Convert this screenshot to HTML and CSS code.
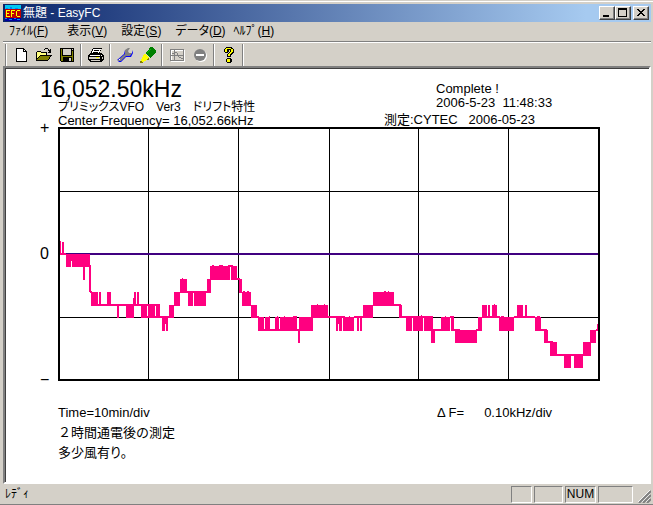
FILE: index.html
```html
<!DOCTYPE html>
<html lang="ja">
<head>
<meta charset="utf-8">
<title>無題 - EasyFC</title>
<link rel="stylesheet" href="styles.css">
</head>
<body>
<div class="window">
  <header class="titlebar">
    <svg class="app-icon" viewBox="0 0 16 16" shape-rendering="crispEdges" aria-hidden="true">
      <path fill="#00c8f0" d="M0 0h16v4H0z"/><path fill="#0000a0" d="M0 4h16v12H0z"/>
      <path fill="#0080ff" d="M1 3h2v1H1zM5 2h2v2H5zM10 3h3v1h-3zM0 13h2v1H0zM4 14h3v1H4zM9 13h2v1H9zM12 14h3v1h-3z"/>
      <path fill="#c00000" d="M0 4h16v9H0z"/>
      <path fill="#ffff00" d="M1 5h4v1H2v2h2v1H2v2h3v1H1zM6 5h4v1H7v2h2v1H7v3H6zM12 5h3v1h-3zM11 6h1v5h-1zM12 11h3v1h-3z"/>
    </svg>
    <h1 class="title">無題 - EasyFC</h1>
    <div class="caption">
      <button type="button" class="cap" aria-label="最小化"><svg viewBox="0 0 12 10" shape-rendering="crispEdges"><path d="M2 7h6v2H2z"/></svg></button>
      <button type="button" class="cap" aria-label="最大化"><svg viewBox="0 0 12 10" shape-rendering="crispEdges"><path fill-rule="evenodd" d="M1 0h9v9H1zM2 2v6h7V2z"/></svg></button>
      <button type="button" class="cap close" aria-label="閉じる"><svg viewBox="0 0 12 10" shape-rendering="crispEdges"><path d="M2 1h2v1h1v1h2V2h1V1h2v1H9v1H8v1H7v1h1v1h1v1h1v1H8V7H7V6H5v1H4v1H2V7h1V6h1V5h1V4H4V3H3V2H2z"/></svg></button>
    </div>
  </header>

  <nav class="menubar">
    <button type="button">ﾌｧｲﾙ(<u>F</u>)</button>
    <button type="button">表示(<u>V</u>)</button>
    <button type="button">設定(<u>S</u>)</button>
    <button type="button" class="palt">データ(<u>D</u>)</button>
    <button type="button">ﾍﾙﾌﾟ(<u>H</u>)</button>
  </nav>

  <div class="toolbar" role="toolbar">
    <span class="grip"></span>
    <button type="button" aria-label="新規作成"><svg viewBox="0 0 16 16" shape-rendering="crispEdges"><path d="M3 1h8v1h1v1h1v1h1v11H3z"/><path fill="#fff" d="M4 2h6v3h3v9H4zM11 3h1v1h-1z"/></svg></button>
    <button type="button" aria-label="開く"><svg viewBox="0 0 16 16" shape-rendering="crispEdges"><path d="M9 1h3v1H9zM8 2h1v1H8zM12 2h1v1h-1zM14 2h1v4h-3V5h1V4h-1V3h2zM1 4h4v1H1zM0 5h1v9H0zM5 5h6v3h-1V6H5zM4 8h12v1H4zM3 9h1v1H3zM2 10h1v1H2zM1 11h1v2H1zM14 9h1v1h-1zM13 10h1v2h-1zM12 12h1v1h-1zM0 13h12v1H0z"/><path fill="#ffff80" d="M1 5h4v1h5v2H4v1H3v1H2v1H1z"/><path fill="#808000" d="M4 9h10v1h-1v2h-1v1H1v-1h1v-1h1v-1h1z"/></svg></button>
    <button type="button" aria-label="保存"><svg viewBox="0 0 16 16" shape-rendering="crispEdges"><path d="M1 1h14v14H2v-1H1z"/><path fill="#808000" d="M2 2h1v7h10V4h1v10h-1v-4H4v4H2z"/><path fill="#d4d0c8" d="M4 2h8v6H4zM13 2h1v1h-1zM10 11h2v3h-2z"/></svg></button>
    <span class="sep"></span>
    <button type="button" aria-label="印刷"><svg viewBox="0 0 16 16" shape-rendering="crispEdges"><path d="M5 1h9v1h-1v2h-1v2h2v1h1v1h1v5h-1v1h-1v1H2v-1H1v-1H0V8h1V7h1V6h1V4h1V2h1z"/><path fill="#fff" d="M5 2h8v1h-1v2h-1v1H4V4h1z"/><path d="M6 3h5v1H6zM5 5h5v1H5z"/><path fill="#fff" d="M2 8h10v1H2zM13 8h1v1h-1z"/><path fill="#d4d0c8" d="M1 10h11v2H1zM14 10h1v2h-1zM3 13h9v1H3z"/><path fill="#ffff00" d="M8 10h3v1H8z"/></svg></button>
    <span class="sep"></span>
    <button type="button" aria-label="設定"><svg viewBox="0 0 16 16"><path fill="#0000ff" d="M2 14l6-6h4l3-2 1-3v3l-2 4H9l-5 5H1z"/><path fill="#0000ff" d="M0 13l7-6 1-4 1 3-1 2-6 6z"/><path fill="#808080" d="M1 13l7-6V3l3-2h2l-2 3 1 2h3l-2 3H9l-5 5H1z"/><path fill="#fff" d="M2 12h1v1H2z"/></svg></button>
    <button type="button" aria-label="ペン"><svg viewBox="0 0 16 16" shape-rendering="crispEdges"><path fill="#008000" d="M10 0h3v1h1v1h1v1h1v3h-1v1h-1v1h-1v1h-1v1h-1v1h-1v-1H9V9H8V8H7V7H6V5h1V4h1V3h1V1h1z"/><path fill="#00c000" d="M10 2h1v1h-1v1H9v1H8v1H7V5h1V4h1V3h1z"/><path fill="#ffff00" d="M4 7h2v1h1v1h1v1h1v2H8v1H6v1H4v1H2v-1H1v-2h1v-2h1V8h1z"/><path fill="#808000" d="M0 14h2v1h1v1H0zM8 11h1v2H7v-1h1z"/></svg></button>
    <span class="sep"></span>
    <button type="button" aria-label="グラフ" disabled><svg viewBox="0 0 16 16" shape-rendering="crispEdges"><path fill="#fff" fill-rule="evenodd" d="M2 3h14v12H2zM3 4v10h12V4z"/><path fill="#808080" fill-rule="evenodd" d="M1 2h14v12H1zM2 3v10h12V3z"/><path fill="#808080" d="M5 3h1v10H5zM2 8h12v1H2zM6 5h2v1H6zM8 6h1v2H8zM9 9h1v1H9zM10 10h2v1h-2zM12 11h2v1h-2zM3 6h2v1H3z"/></svg></button>
    <button type="button" aria-label="停止" disabled><svg viewBox="0 0 16 16"><circle cx="9" cy="9" r="6" fill="#fff"/><circle cx="8" cy="8" r="6" fill="#808080"/><path fill="#fff" d="M4 7h8v2H4z"/></svg></button>
    <span class="sep"></span>
    <button type="button" aria-label="バージョン情報"><svg viewBox="0 0 16 16" shape-rendering="crispEdges"><path d="M5 0h6v1h1v1h1v4h-1v1h-1v1h-1v2H6V7h1V6h1V5h1V3H8v2H7v1H4V5H3V2h1V1h1zM6 11h4v1h1v3h-1v1H6v-1H5v-3h1z"/><path fill="#ffff00" d="M5 1h5v1h2v3h-1v1h-1v1H9v2H7V7h1V6h1V5h1V2H6v3H4V2h1zM6 12h3v3H6z"/></svg></button>
    <span class="sep"></span>
  </div>

  <main class="view">
    <section class="head">
      <div class="head-left">
        <p class="reading">16,052.50kHz</p>
        <p class="line subject palt">プリミックスVFO　Ver3　ドリフト特性</p>
        <p class="line indent">Center Frequency= 16,052.66kHz</p>
      </div>
      <div class="head-right">
        <p class="line state">Complete !</p>
        <p class="line state">2006-5-23&nbsp; 11:48:33</p>
        <p class="line source">測定:CYTEC&nbsp;&nbsp; 2006-05-23</p>
      </div>
    </section>
    <section class="plot">
      <div class="axis"><span>+</span><span>0</span><span>−</span></div>
      <svg class="chart" viewBox="58 127 542 254" preserveAspectRatio="none" shape-rendering="crispEdges" role="img" aria-label="周波数ドリフト">
        <path d="M148 127h1v254h-1zM238 127h1v254h-1zM329 127h1v254h-1zM418 127h1v254h-1zM508 127h1v254h-1zM58 191h542v1H58zM58 317h542v1H58z"/>
        <path fill="#400080" d="M58 253h542v2H58z"/>
        <path fill-rule="evenodd" d="M58 127h542v254H58zM60 129v250h538V129z"/>
        <g id="trace" fill="#ff0080">
          <path d="M60 241h1v14h-1zM62 242h2v12h-2zM60 253h6v2h-6zM66 254h5v13h-5zM71 254h1v7h-1zM72 254h18v13H72zM83 267h2v13h-2zM89 265h2v27h-2zM90 291h2v2h-2zM91 292h7v14h-7zM91 304h27v2H91zM99 292h2v13h-2zM107 292h4v13h-4zM117 304h2v14h-2zM118 304h16v2h-16zM126 305h8v13h-8zM133 298h1v8h-1zM134 292h2v13h-2zM137 292h2v13h-2zM133 304h27v2h-27zM141 305h6v13h-6zM148 305h7v13h-7zM156 305h4v13h-4zM141 316h33v2h-33zM162 317h3v14h-3zM165 317h1v7h-1zM166 317h2v14h-2zM169 305h5v13h-5zM174 292h6v14h-6zM180 279h7v14h-7z"/>
          <path d="M187 291h23v2h-23zM188 292h5v14h-5zM194 292h12v14h-12zM207 279h4v14h-4zM210 266h20v14h-20zM230 265h1v2h-1zM231 266h6v14h-6zM237 278h3v2h-3zM239 279h3v14h-3zM242 292h9v14h-9zM251 305h6v13h-6zM256 316h3v2h-3zM258 317h6v14h-6zM265 317h5v14h-5zM275 317h4v14h-4zM280 317h17v14h-17zM258 329h42v2h-42zM298 329h2v14h-2zM299 317h14v14h-14zM311 305h17v13h-17zM328 316h17v2h-17zM336 317h2v14h-2zM338 317h1v7h-1zM339 317h3v14h-3zM343 317h11v14h-11zM354 316h9v2h-9zM357 317h2v14h-2zM360 317h2v14h-2zM363 305h10v13h-10zM373 292h21v14h-21zM394 304h7v2h-7zM399 305h3v13h-3z"/>
          <path d="M402 316h31v2h-31zM406 317h6v14h-6zM413 317h10v14h-10zM424 317h9v14h-9zM431 329h4v14h-4zM435 329h6v2h-6zM441 317h9v14h-9zM450 316h4v2h-4zM451 317h3v14h-3zM453 329h7v2h-7zM455 330h22v13h-22zM476 329h6v2h-6zM478 317h4v14h-4zM482 305h5v13h-5zM488 305h2v13h-2zM492 305h5v13h-5zM482 316h18v2h-18zM499 317h15v14h-15zM514 316h21v2h-21zM517 305h6v13h-6zM525 305h2v13h-2zM535 317h6v14h-6zM541 329h6v2h-6zM544 330h4v13h-4zM548 341h5v2h-5zM550 342h7v14h-7zM557 354h26v2h-26zM564 355h7v13h-7zM574 355h9v13h-9zM583 342h8v14h-8zM590 330h6v13h-6zM596 329h2v2h-2zM597 324h1v6h-1z"/>
          <path d="M182 278h1v1h-1zM212 265h2v1h-2zM219 265h4v1h-4zM228 265h5v1h-5zM196 291h3v1h-3zM243 291h2v1h-2zM247 291h2v1h-2zM269 316h1v1h-1zM277 316h1v1h-1zM284 316h1v1h-1zM293 316h4v1h-4zM317 304h1v1h-1zM324 304h1v1h-1zM349 316h1v1h-1zM384 291h2v1h-2zM388 291h1v1h-1zM421 315h1v1h-1zM445 316h1v1h-1zM452 316h1v1h-1zM494 304h1v1h-1zM501 316h3v1h-3zM537 316h3v1h-3zM567 354h1v1h-1z"/>
        </g>
      </svg>
    </section>
    <section class="notes">
      <div>
        <p>Time=10min/div</p>
        <p>２時間通電後の測定</p>
        <p class="palt">多少風有り。</p>
      </div>
      <p class="scale"><span>Δ F=</span><span>0.10kHz/div</span></p>
    </section>
  </main>

  <footer class="status">
    <span class="message">ﾚﾃﾞｨ</span>
    <span class="pane narrow"></span>
    <span class="pane"></span>
    <span class="pane num">NUM</span>
    <span class="pane wide"></span>
    <svg class="size-grip" viewBox="0 0 13 13" aria-hidden="true"><path stroke="#fff" d="M0 12L12 0M4 12l8-8M8 12l4-4"/><path stroke="#808080" stroke-width="2" d="M1 13L13 1M5 13l8-8M9 13l4-4"/></svg>
  </footer>
</div>
</body>
</html>
```
FILE: styles.css
```css
* { box-sizing: border-box; }

html, body { height: 100%; }

body {
  margin: 0;
  background: #d4d0c8;
  color: #000;
  font: 12px/13px "Liberation Sans", "Noto Sans CJK JP", sans-serif;
}

h1, p { margin: 0; }

button {
  margin: 0;
  padding: 0;
  border: 0;
  background: none;
  color: inherit;
  font: inherit;
}

.window {
  display: flex;
  flex-direction: column;
  min-height: 100%;
  padding: 4px 2px 1px 3px;
  border-bottom: 1px solid #808080;
  background: linear-gradient(#fff, #fff) 0 1px / 100% 1px no-repeat #d4d0c8;
}

.titlebar {
  display: flex;
  align-items: center;
  height: 18px;
  padding: 0 2px;
  background: linear-gradient(to right, #0a246a, #a6caf0 90%);
  color: #fff;
}

.app-icon { width: 16px; height: 16px; margin-right: 2px; }

.title { flex: 1; font-size: 12px; font-weight: 400; }

.caption { display: flex; }

.cap {
  display: flex;
  width: 16px;
  height: 14px;
  padding: 1px;
  border: 1px solid;
  border-color: #fff #404040 #404040 #fff;
  background: #d4d0c8;
  box-shadow: inset -1px -1px #808080;
}

.cap svg { width: 12px; height: 10px; }
.close { margin-left: 2px; }

.palt { font-feature-settings: "palt"; }

.menubar {
  display: flex;
  height: 20px;
  border-bottom: 1px solid #808080;
}

.menubar button { padding: 0 7px; }
.menubar button:first-child { padding: 0 12px 0 6px; }
.menubar button:last-child { padding-left: 1px; }
.menubar u { text-underline-offset: 1px; }

.toolbar {
  display: flex;
  align-items: center;
  height: 24px;
  border-top: 1px solid #fff;
}

.toolbar button {
  display: flex;
  justify-content: center;
  width: 23px;
}

.toolbar svg { width: 16px; height: 16px; }

.sep, .grip {
  width: 2px;
  height: 22px;
  margin: 0 2px;
  border-left: 1px solid #808080;
  border-right: 1px solid #fff;
}

.view {
  flex: 1;
  padding: 10px 49px 0 35px;
  border: 2px solid;
  border-color: #808080 #fff #fff #808080;
  box-shadow: inset 1px 1px #404040;
  background: #fff;
  font-size: 13px;
}

.head { display: grid; grid-template-columns: 344fr 216fr; height: 49px; }

.reading { font-size: 23px; line-height: 23px; }
.line { white-space: nowrap; line-height: 13px; }
.subject { padding-left: 18px; font-size: 12px; }
.indent { padding-left: 18px; }
.head-right { padding-top: 4px; }
.state { padding-left: 52px; line-height: 14px; }
.source { padding-top: 3px; }

.plot { display: grid; grid-template-columns: 18px 1fr; }

.axis {
  display: flex;
  flex-direction: column;
  justify-content: space-between;
  margin: -8px 0;
  font-size: 16px;
  line-height: 18px;
}

.chart { width: 100%; height: 254px; }

.notes {
  display: grid;
  grid-template-columns: 379fr 163fr;
  padding: 22px 0 18px 18px;
  line-height: 20px;
}

.scale { display: flex; gap: 20px; }

.status {
  display: flex;
  align-items: center;
  gap: 2px;
  height: 19px;
  padding-top: 1px;
}

.message { flex: 1; padding-left: 2px; }

.pane {
  width: 29px;
  height: 17px;
  border: 1px solid;
  border-color: #808080 #fff #fff #808080;
  line-height: 15px;
  text-align: center;
}

.narrow { width: 21px; }
.num { width: 31px; }
.wide { width: 35px; }
.size-grip { width: 13px; height: 13px; align-self: flex-end; margin-left: 3px; }
```
